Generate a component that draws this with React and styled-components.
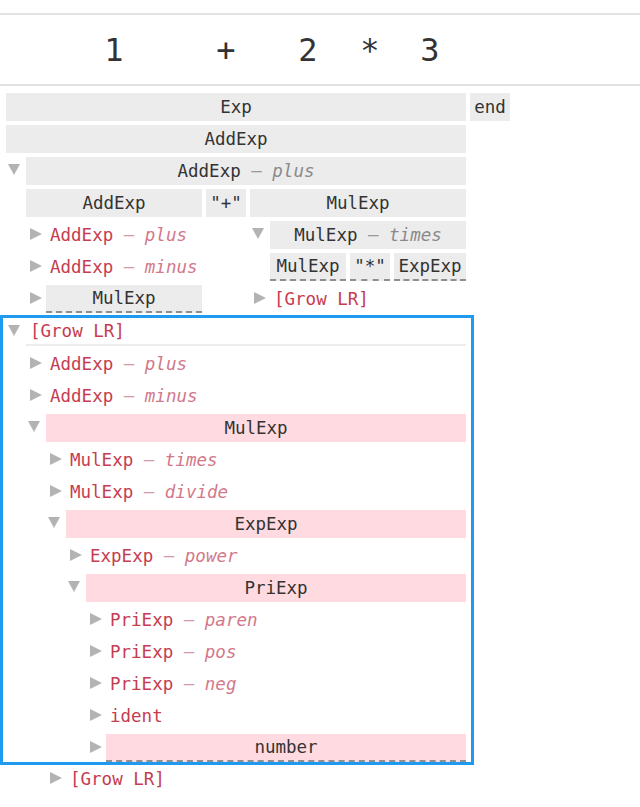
import React from 'react';
import styled, { createGlobalStyle, css } from 'styled-components';

const GlobalStyle = createGlobalStyle`
  html, body {
    margin: 0;
    padding: 0;
    background: #fff;
  }
  body {
    font-family: "DejaVu Sans Mono", "Liberation Mono", monospace;
    color: #333;
  }
`;

const RED = '#c63c50';

const InputBar = styled.div`
  margin-top: 13px;
  height: 69px;
  border-top: 2px solid #e2e2e2;
  border-bottom: 2px solid #e2e2e2;
  display: flex;
  align-items: center;
  padding-left: 26px;
  font-size: 32px;
  color: #333;
`;

const InputChar = styled.span`
  flex: none;
  width: ${(p) => p.$w}px;
  margin-left: ${(p) => p.$ml || 0}px;
  text-align: center;
`;

const TreeArea = styled.div`
  margin-top: 7px;
  padding-left: 6px;
  font-size: 17.5px;
  display: flex;
  gap: 4px;
  align-items: flex-start;
`;

const NodeWrap = styled.div`
  display: flex;
  flex-direction: column;
  gap: 4px;
  ${(p) => p.$w && css`flex: none; width: ${p.$w}px;`}
  ${(p) => p.$indent && css`padding-left: ${p.$indent}px;`}
`;

const Highlight = styled.div`
  margin: -2px -8px -4px -6px;
  padding: 0 5px 0 3px;
  border: 3px solid #1e9bf0;
`;

const Header = styled.div`
  display: flex;
  height: 28px;
`;

const ToggleSlot = styled.div`
  flex: none;
  width: 20px;
  position: relative;
  svg {
    position: absolute;
    top: 7px;
    left: ${(p) => (p.$open ? 2 : 4)}px;
  }
`;

const labelKinds = {
  box: css`
    background: #ececec;
    justify-content: center;
  `,
  pink: css`
    background: #ffdbe1;
    justify-content: center;
  `,
  fail: css`
    color: ${RED};
    padding-left: 4px;
  `,
  failLine: css`
    color: ${RED};
    padding-left: 4px;
    border-bottom: 2px solid #ededed;
  `,
};

const Label = styled.div`
  flex: 1;
  min-width: 0;
  box-sizing: border-box;
  height: 28px;
  display: flex;
  align-items: center;
  white-space: pre;
  ${(p) => labelKinds[p.$kind]}
  ${(p) => p.$dashed && css`border-bottom: 2px dashed #8f8f8f;`}
`;

const Dash = styled.span`
  color: ${(p) => (p.$red ? '#d49aa4' : '#9a9a9a')};
`;

const CaseName = styled.span`
  font-style: italic;
  color: ${(p) => (p.$red ? '#d2788a' : '#8a8a8a')};
`;

const Children = styled.div`
  display: flex;
  flex-direction: ${(p) => (p.$row ? 'row' : 'column')};
  align-items: ${(p) => (p.$row ? 'flex-start' : 'stretch')};
  gap: 4px;
  padding-left: ${(p) => (p.$indent ? 20 : 0)}px;
`;

const Triangle = ({ open }) =>
  open ? (
    <svg width="12" height="12" viewBox="0 0 12 12">
      <polygon points="0,0 12,0 6,11" fill="#b3b3b3" />
    </svg>
  ) : (
    <svg width="12" height="12" viewBox="0 0 12 12">
      <polygon points="0,0 12,6 0,12" fill="#b3b3b3" />
    </svg>
  );

const TreeNode = ({ node }) => {
  const kind = node.kind || 'box';
  const red = kind === 'fail' || kind === 'failLine';
  const body = (
    <NodeWrap $w={node.w} $indent={node.indent}>
      <Header>
        {node.toggle && (
          <ToggleSlot $open={node.toggle === 'open'}>
            <Triangle open={node.toggle === 'open'} />
          </ToggleSlot>
        )}
        <Label $kind={kind} $dashed={node.dashed}>
          {node.label}
          {node.caseName && (
            <>
              <Dash $red={red}> — </Dash>
              <CaseName $red={red}>{node.caseName}</CaseName>
            </>
          )}
        </Label>
      </Header>
      {node.children && (
        <Children $row={node.row} $indent={!!node.toggle}>
          {node.children.map((c, i) => (
            <TreeNode key={i} node={c} />
          ))}
        </Children>
      )}
    </NodeWrap>
  );
  return node.highlight ? <Highlight>{body}</Highlight> : body;
};

const growLR = {
  label: '[Grow LR]',
  kind: 'failLine',
  toggle: 'open',
  highlight: true,
  children: [
    { label: 'AddExp', caseName: 'plus', kind: 'fail', toggle: 'closed' },
    { label: 'AddExp', caseName: 'minus', kind: 'fail', toggle: 'closed' },
    {
      label: 'MulExp',
      kind: 'pink',
      toggle: 'open',
      children: [
        { label: 'MulExp', caseName: 'times', kind: 'fail', toggle: 'closed' },
        { label: 'MulExp', caseName: 'divide', kind: 'fail', toggle: 'closed' },
        {
          label: 'ExpExp',
          kind: 'pink',
          toggle: 'open',
          children: [
            { label: 'ExpExp', caseName: 'power', kind: 'fail', toggle: 'closed' },
            {
              label: 'PriExp',
              kind: 'pink',
              toggle: 'open',
              children: [
                { label: 'PriExp', caseName: 'paren', kind: 'fail', toggle: 'closed' },
                { label: 'PriExp', caseName: 'pos', kind: 'fail', toggle: 'closed' },
                { label: 'PriExp', caseName: 'neg', kind: 'fail', toggle: 'closed' },
                { label: 'ident', kind: 'fail', toggle: 'closed' },
                { label: 'number', kind: 'pink', toggle: 'closed', dashed: true },
              ],
            },
          ],
        },
      ],
    },
  ],
};

const tree = [
  {
    label: 'Exp',
    w: 460,
    children: [
      {
        label: 'AddExp',
        children: [
          {
            label: 'AddExp',
            caseName: 'plus',
            toggle: 'open',
            row: true,
            children: [
              {
                label: 'AddExp',
                w: 176,
                children: [
                  { label: 'AddExp', caseName: 'plus', kind: 'fail', toggle: 'closed' },
                  { label: 'AddExp', caseName: 'minus', kind: 'fail', toggle: 'closed' },
                  { label: 'MulExp', toggle: 'closed', dashed: true },
                ],
              },
              { label: '"+"', w: 40 },
              {
                label: 'MulExp',
                w: 216,
                children: [
                  {
                    label: 'MulExp',
                    caseName: 'times',
                    toggle: 'open',
                    row: true,
                    children: [
                      { label: 'MulExp', w: 76, dashed: true },
                      { label: '"*"', w: 40, dashed: true },
                      { label: 'ExpExp', w: 72, dashed: true },
                    ],
                  },
                  { label: '[Grow LR]', kind: 'fail', toggle: 'closed' },
                ],
              },
            ],
          },
          growLR,
          { label: '[Grow LR]', kind: 'fail', toggle: 'closed', indent: 40 },
        ],
      },
    ],
  },
  { label: 'end', w: 40 },
];

export default function App() {
  return (
    <>
      <GlobalStyle />
      <InputBar>
        <InputChar $w={176}>1</InputChar>
        <InputChar $w={40} $ml={4}>+</InputChar>
        <InputChar $w={76} $ml={24}>2</InputChar>
        <InputChar $w={40} $ml={4}>*</InputChar>
        <InputChar $w={72} $ml={4}>3</InputChar>
      </InputBar>
      <TreeArea>
        {tree.map((n, i) => (
          <TreeNode key={i} node={n} />
        ))}
      </TreeArea>
    </>
  );
}
